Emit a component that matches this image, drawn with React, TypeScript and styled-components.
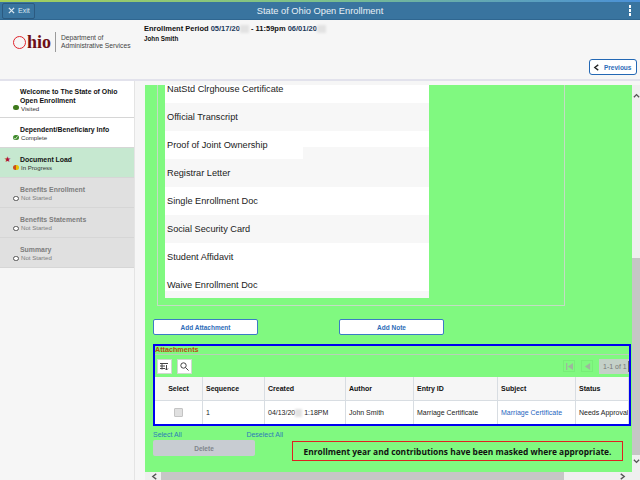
import { FunctionComponent } from 'react'
import styled, { createGlobalStyle } from 'styled-components'

const GlobalStyle = createGlobalStyle`
  html, body {
    margin: 0;
    padding: 0;
    width: 640px;
    height: 480px;
    overflow: hidden;
    background: #fff;
    font-family: "Liberation Sans", Arial, sans-serif;
  }
`

const Page = styled.div`
  width: 640px;
  height: 480px;
  display: flex;
  flex-direction: column;
  overflow: hidden;
`

const TopStrip = styled.div`
  height: 2px;
  flex: none;
  background: linear-gradient(90deg, #a4cf5c 0%, #7cc08c 50%, #4a90d8 100%);
`

const Banner = styled.div`
  height: 18px;
  flex: none;
  display: grid;
  grid-template-columns: 1fr auto 1fr;
  align-items: center;
  background: #39749f;
  border-bottom: 1px solid #2f6690;
  box-sizing: border-box;
  padding: 0 2px;
`

const ExitButton = styled.button`
  width: 33px;
  height: 16px;
  padding: 0 0 0 5px;
  display: flex;
  align-items: center;
  gap: 3px;
  background: #39749f;
  border: 1px solid #2c5a80;
  border-radius: 2px;
  color: #dbe7f0;
  font: 7px "Liberation Sans", Arial, sans-serif;
`

const BannerTitle = styled.div`
  color: #e8f0f6;
  font-size: 9.3px;
`

const MenuDots = styled.div`
  justify-self: end;
  margin-right: 7px;
  display: flex;
  flex-direction: column;
  gap: 1.5px;

  span {
    width: 2.5px;
    height: 2.5px;
    background: #fff;
  }
`

const Header = styled.div`
  height: 61px;
  flex: none;
  display: flex;
  background: #f6f6f6;
  border-bottom: 2px solid #e2e2ec;
  box-sizing: border-box;
`

const Logo = styled.div`
  width: 144px;
  flex: none;
  box-sizing: border-box;
  padding: 12px 0 0 13px;
  display: flex;
  align-items: flex-start;
`

const LogoWord = styled.div`
  display: flex;
  align-items: center;
  height: 20px;
  color: #6e0f17;
  font: bold 18px "Liberation Serif", serif;
`

const LogoO = styled.span`
  width: 13px;
  height: 13px;
  box-sizing: border-box;
  margin-right: 1px;
  border: 1.2px solid #e0242c;
  border-radius: 50%;
`

const LogoRule = styled.div`
  width: 1px;
  height: 20px;
  margin: 0 5px 0 4px;
  background: #9a9a9a;
`

const LogoText = styled.div`
  font-size: 6.7px;
  line-height: 8px;
  color: #444;
  padding-top: 2px;
  white-space: nowrap;
`

const Period = styled.div`
  padding-top: 3px;
  color: #111;
  font-weight: bold;
`

const PeriodLine = styled.div`
  font-size: 7.5px;
  line-height: 11px;
  display: flex;
  align-items: center;
  white-space: nowrap;

  b {
    color: #1c3a5c;
  }
`

const UserLine = styled.div`
  font-size: 6.3px;
  line-height: 9px;
`

const Masked = styled.span<{ $w: number }>`
  display: inline-block;
  width: ${(props) => props.$w}px;
  height: 8px;
  background: #e2e2e2;
  filter: blur(1px);
`

const HeaderEnd = styled.div`
  flex: 1;
  display: flex;
  align-items: flex-end;
  justify-content: flex-end;
  padding: 0 3px 4px 0;
`

const PreviousButton = styled.button`
  width: 48px;
  height: 16px;
  padding: 0 0 0 3px;
  display: flex;
  align-items: center;
  gap: 4px;
  background: #fff;
  border: 1.2px solid #2368b4;
  border-radius: 3px;
  color: #2d6cb8;
  font: bold 6.5px "Liberation Sans", Arial, sans-serif;
`

const PreviousIcon = styled.span`
  display: flex;
  color: #222;
`

const Body = styled.div`
  flex: 1;
  min-height: 0;
  display: flex;
`

const Sidebar = styled.div`
  width: 135px;
  flex: none;
  background: #f6f6f6;
  border-right: 1px solid #e4e4e4;
  box-sizing: border-box;
`

const Step = styled.div<{ $bg: string; $h: number }>`
  height: ${(props) => props.$h}px;
  box-sizing: border-box;
  background: ${(props) => props.$bg};
  border-bottom: 1px solid #d6d6d6;
  padding: 3px 0 0 20px;
  display: flex;
  flex-direction: column;
  justify-content: center;
  position: relative;
`

const StepName = styled.div<{ $muted?: boolean }>`
  font-size: 6.9px;
  font-weight: bold;
  line-height: 8.5px;
  color: ${(props) => (props.$muted ? '#7d7d7d' : '#111')};
`

const StepStatus = styled.div<{ $muted?: boolean }>`
  font-size: 6.1px;
  line-height: 8px;
  padding-left: 1px;
  color: ${(props) => (props.$muted ? '#7d7d7d' : '#333')};
`

const Dot = styled.span<{ $bg: string; $ring?: string }>`
  position: absolute;
  left: 13px;
  bottom: ${(props) => (props.$ring ? 6 : 7)}px;
  width: 5.5px;
  height: 5.5px;
  display: flex;
  border-radius: 50%;
  box-sizing: border-box;
  background: ${(props) => props.$bg};
  border: ${(props) => (props.$ring ? `1px solid ${props.$ring}` : 'none')};
`

const Star = styled.span`
  position: absolute;
  left: 4px;
  top: 7px;
  color: #b01030;
  font-size: 7.5px;
  line-height: 9px;
`

const Content = styled.div`
  flex: 1;
  min-width: 0;
  display: grid;
  grid-template-columns: 1fr 8px;
  grid-template-rows: 1fr 8px;
  background: #f6f6f6;
`

const Green = styled.div`
  margin: 4px 0 0 10px;
  background: #80f980;
  overflow: hidden;
`

const Frame = styled.div`
  width: 408px;
  height: 231px;
  margin: -10px 0 0 12px;
  padding-left: 7px;
  box-sizing: border-box;
  border: solid #c4dcc4;
  border-width: 0 1px 1px 1px;
  overflow: hidden;
`

const DocList = styled.div`
  width: 264px;
  height: 223px;
  overflow: hidden;
  background: #fff;
`

const DocRow = styled.div<{ $alt?: boolean; $notch?: boolean; $tail?: boolean }>`
  height: 28px;
  display: flex;
  align-items: center;
  padding-left: 2px;
  font-size: 9.2px;
  color: #222;
  background: ${(props) => (props.$alt ? '#f7f7f7' : '#fff')};
  ${(props) => props.$notch && 'background: linear-gradient(#f7f7f7, #f7f7f7) no-repeat right bottom / 126px 12px, #fff;'}
  ${(props) => props.$tail && 'background: linear-gradient(#f7f7f7, #f7f7f7) no-repeat left bottom / 100% 8px, #fff;'}
`

const ButtonRow = styled.div`
  display: flex;
  gap: 81px;
  margin: 13px 0 0 8px;
`

const AddButton = styled.button`
  width: 105px;
  height: 16px;
  padding: 0;
  background: #fff;
  border: 1px solid #3b7cc4;
  border-radius: 2px;
  color: #2d6cb8;
  font: bold 6.5px "Liberation Sans", Arial, sans-serif;
`

const Attachments = styled.div`
  width: 478px;
  height: 82px;
  margin: 9px 0 0 8px;
  box-sizing: border-box;
  border: 2px solid #0000f0;
  overflow: hidden;
`

const GridTitle = styled.div`
  font-size: 7.2px;
  font-weight: bold;
  line-height: 8px;
  color: #b84a10;
  height: 8px;
  border-bottom: 1px solid #b8d0b8;
`

const GridBar = styled.div`
  height: 22px;
  display: flex;
  align-items: center;
  gap: 5px;
  padding-left: 2px;
`

const ToolButton = styled.div`
  width: 15px;
  height: 15px;
  display: flex;
  align-items: center;
  justify-content: center;
  background: #fff;
  border: 1px solid #d0d8d0;
  box-sizing: border-box;
`

const Pager = styled.div`
  margin-left: auto;
  display: flex;
  align-items: center;
  gap: 6px;
`

const PagerArrow = styled.div`
  width: 12px;
  height: 12px;
  display: flex;
  align-items: center;
  justify-content: center;
  color: #9db89d;
  border: 1px solid #78ee78;
  box-sizing: border-box;
`

const PagerLabel = styled.div`
  width: 30px;
  height: 15px;
  display: flex;
  align-items: center;
  gap: 1px;
  padding-left: 4px;
  background: #c4d0c8;
  color: #777;
  font-size: 7px;
  white-space: nowrap;
  overflow: hidden;
  box-sizing: border-box;
`

const PagerEdge = styled.span`
  flex: none;
  width: 5px;
  height: 11px;
  background: #fff;
  border: 1px solid #666;
  box-sizing: border-box;
`

const Table = styled.div`
  display: grid;
  grid-template-columns: 48px 62px 81px 68px 84px 78px 53px;
  grid-template-rows: 24px 23px;
  background: #fff;
  font-size: 7px;
  color: #222;
`

const HeadCell = styled.div<{ $center?: boolean }>`
  display: flex;
  align-items: center;
  justify-content: ${(props) => (props.$center ? 'center' : 'flex-start')};
  padding-left: ${(props) => (props.$center ? 0 : 3)}px;
  background: #f6f6f6;
  font-weight: bold;
  color: #111;
  border-right: 1px solid #d8dde2;
  border-bottom: 1px solid #d8dde2;
`

const Cell = styled.div<{ $center?: boolean; $link?: boolean }>`
  display: flex;
  align-items: center;
  justify-content: ${(props) => (props.$center ? 'center' : 'flex-start')};
  padding-left: ${(props) => (props.$center ? 0 : 3)}px;
  border-right: 1px solid #d8dde2;
  white-space: nowrap;
  overflow: hidden;
  color: ${(props) => (props.$link ? '#1f66c0' : '#222')};
`

const CheckBox = styled.span`
  width: 7px;
  height: 7px;
  background: #e0e0e0;
  border: 1px solid #c4c4c4;
  border-radius: 1px;
`

const BottomArea = styled.div`
  display: flex;
  margin: 5px 0 0 8px;
`

const BottomLeft = styled.div`
  width: 139px;
  flex: none;
`

const SelectLinks = styled.div`
  display: flex;
  justify-content: space-between;
  width: 130px;
  font-size: 7px;
  line-height: 8px;
  color: #2d7cb8;
`

const DeleteButton = styled.button`
  display: block;
  width: 102px;
  height: 16px;
  margin-top: 1px;
  padding: 0;
  background: #c8ccd2;
  border: none;
  border-radius: 2px;
  color: #80858c;
  font: bold 6.5px "Liberation Sans", Arial, sans-serif;
`

const Notice = styled.div`
  width: 331px;
  height: 20px;
  margin-top: 10px;
  box-sizing: border-box;
  display: flex;
  align-items: center;
  justify-content: center;
  border: 1px solid #e02020;
  color: #111;
  font: bold 8.4px "Open Sans", sans-serif;
  white-space: nowrap;
`

const ScrollY = styled.div`
  grid-row: 1 / 3;
  grid-column: 2;
  display: flex;
  flex-direction: column;
  align-items: center;
  margin-top: 4px;
  background: #efefef;
  padding-top: 7px;
  color: #555;
`

const ThumbY = styled.div`
  width: 100%;
  height: 197px;
  margin-top: auto;
  background: #c6c6c6;
`

const ScrollYEnd = styled.div`
  height: 25px;
  flex: none;
  display: flex;
  align-items: flex-start;
  padding-top: 3px;
  box-sizing: border-box;
`

const ScrollX = styled.div`
  margin-left: 10px;
  padding: 0 6px;
  display: flex;
  align-items: center;
  background: #efefef;
  color: #555;
`

const ThumbX = styled.div`
  width: 403px;
  height: 100%;
  margin-left: 3px;
  margin-right: auto;
  background: #c6c6c6;
`

const Arrow: FunctionComponent<{ d: string; size?: number }> = ({ d, size = 7 }) => (
  <svg width={size} height={size} viewBox="0 0 8 8" fill="none" stroke="currentColor" strokeWidth="1.5">
    <path d={d} />
  </svg>
)

const steps = [
  { name: 'Dependent/Beneficiary Info', status: 'Complete', bg: '#fff', h: 30, dot: '#3f8a2c', check: true },
  { name: 'Document Load', status: 'In Progress', bg: '#c6e8d0', h: 30, dot: 'linear-gradient(90deg, #c8501c 50%, #e8c000 50%)', star: true }
]

const pending = ['Benefits Enrollment', 'Benefits Statements', 'Summary']

const docs = [
  'NatStd Clrghouse Certificate',
  'Official Transcript',
  'Proof of Joint Ownership',
  'Registrar Letter',
  'Single Enrollment Doc',
  'Social Security Card',
  'Student Affidavit',
  'Waive Enrollment Doc'
]

export default function App() {
  return (
    <Page>
      <GlobalStyle />
      <TopStrip />
      <Banner>
        <ExitButton>
          <Arrow d="M1 1l6 6M7 1l-6 6" />
          Exit
        </ExitButton>
        <BannerTitle>State of Ohio Open Enrollment</BannerTitle>
        <MenuDots>
          <span />
          <span />
          <span />
        </MenuDots>
      </Banner>
      <Header>
        <Logo>
          <LogoWord>
            <LogoO />
            hio
          </LogoWord>
          <LogoRule />
          <LogoText>
            Department of
            <br />
            Administrative Services
          </LogoText>
        </Logo>
        <Period>
          <PeriodLine>
            Enrollment Period <b>&nbsp;05/17/20</b>
            <Masked $w={9} />
            &nbsp;- 11:59pm <b>&nbsp;06/01/20</b>
            <Masked $w={9} />
          </PeriodLine>
          <UserLine>John Smith</UserLine>
        </Period>
        <HeaderEnd>
          <PreviousButton>
            <PreviousIcon>
              <Arrow d="M6 1L2 4l4 3" />
            </PreviousIcon>
            Previous
          </PreviousButton>
        </HeaderEnd>
      </Header>
      <Body>
        <Sidebar>
          <Step $bg="#fff" $h={37}>
            <StepName>
              Welcome to The State of Ohio
              <br />
              Open Enrollment
            </StepName>
            <StepStatus>Visited</StepStatus>
            <Dot $bg="#3f7a1c" />
          </Step>
          {steps.map((s) => (
            <Step key={s.name} $bg={s.bg} $h={s.h}>
              {s.star && <Star>★</Star>}
              <StepName>{s.name}</StepName>
              <StepStatus>{s.status}</StepStatus>
              <Dot $bg={s.dot}>
                {s.check && (
                  <svg viewBox="0 0 8 8" fill="none" stroke="#e8f4e0" strokeWidth="1.3">
                    <path d="M1.5 4l2 2 3-4" />
                  </svg>
                )}
              </Dot>
            </Step>
          ))}
          {pending.map((name) => (
            <Step key={name} $bg="#e0e0e0" $h={30}>
              <StepName $muted>{name}</StepName>
              <StepStatus $muted>Not Started</StepStatus>
              <Dot $bg="#fff" $ring="#555" />
            </Step>
          ))}
        </Sidebar>
        <Content>
          <Green>
            <Frame>
              <DocList>
                {docs.map((d, i) => (
                  <DocRow key={d} $alt={i % 2 === 1} $notch={i === 2} $tail={i === 7}>
                    {d}
                  </DocRow>
                ))}
              </DocList>
            </Frame>
            <ButtonRow>
              <AddButton>Add Attachment</AddButton>
              <AddButton>Add Note</AddButton>
            </ButtonRow>
            <Attachments>
              <GridTitle>Attachments</GridTitle>
              <GridBar>
                <ToolButton>
                  <svg width="9" height="9" viewBox="0 0 9 9" fill="none" stroke="#444" strokeWidth="1">
                    <path d="M0 1.5h8M0 4h5M0 6.5h5M2 1.5v6M6.5 3v5M5 6.5l1.5 1.5L8 6.5" />
                  </svg>
                </ToolButton>
                <ToolButton>
                  <svg width="9" height="9" viewBox="0 0 9 9" fill="none" stroke="#444" strokeWidth="1">
                    <circle cx="3.5" cy="3.5" r="2.7" />
                    <path d="M5.5 5.5L8.5 8.5" />
                  </svg>
                </ToolButton>
                <Pager>
                  <PagerArrow>
                    <svg width="7" height="7" viewBox="0 0 8 8" fill="currentColor">
                      <path d="M0 0h1.5v8H0zM8 0v8L2 4z" />
                    </svg>
                  </PagerArrow>
                  <PagerArrow>
                    <svg width="7" height="7" viewBox="0 0 8 8" fill="currentColor">
                      <path d="M7 0v8L1 4z" />
                    </svg>
                  </PagerArrow>
                  <PagerLabel>
                    1-1 of 1
                    <PagerEdge />
                  </PagerLabel>
                </Pager>
              </GridBar>
              <Table>
                <HeadCell $center>Select</HeadCell>
                <HeadCell>Sequence</HeadCell>
                <HeadCell>Created</HeadCell>
                <HeadCell>Author</HeadCell>
                <HeadCell>Entry ID</HeadCell>
                <HeadCell>Subject</HeadCell>
                <HeadCell>Status</HeadCell>
                <Cell $center>
                  <CheckBox />
                </Cell>
                <Cell>1</Cell>
                <Cell>
                  04/13/20
                  <Masked $w={7} />
                  &nbsp;1:18PM
                </Cell>
                <Cell>John Smith</Cell>
                <Cell>Marriage Certificate</Cell>
                <Cell $link>Marriage Certificate</Cell>
                <Cell>Needs Approval</Cell>
              </Table>
            </Attachments>
            <BottomArea>
              <BottomLeft>
                <SelectLinks>
                  <span>Select All</span>
                  <span>Deselect All</span>
                </SelectLinks>
                <DeleteButton>Delete</DeleteButton>
              </BottomLeft>
              <Notice>Enrollment year and contributions have been masked where appropriate.</Notice>
            </BottomArea>
          </Green>
          <ScrollY>
            <Arrow d="M1 6l3-3 3 3" />
            <ThumbY />
            <ScrollYEnd>
              <Arrow d="M1 2l3 3 3-3" />
            </ScrollYEnd>
          </ScrollY>
          <ScrollX>
            <Arrow d="M6 1L2 4l4 3" />
            <ThumbX />
            <Arrow d="M2 1l4 3-4 3" />
          </ScrollX>
        </Content>
      </Body>
    </Page>
  )
}
